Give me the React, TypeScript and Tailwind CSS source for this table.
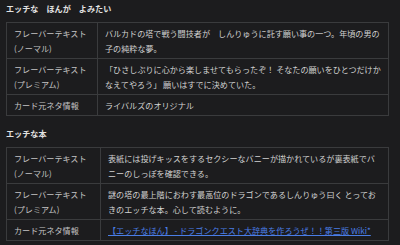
import React from 'react';

type Row = { label: React.ReactNode; value: React.ReactNode };

const Section = ({ title, rows, labelW, valuePr }: { title: string; rows: Row[]; labelW: string; valuePr: string }) => (
  <div>
    <h3 className="h-[15px] leading-[15px] font-bold text-[#e2e2e2] mb-[6px]">{title}</h3>
    <table className="w-[383px] border-collapse border border-[#3a3b3d]">
      <tbody>
        {rows.map((r, i) => (
          <tr key={i} className="border-b border-[#3a3b3d]">
            <td className={`${labelW} align-top pl-[7px] pr-[4px] pt-[3px] pb-[2px] text-[#c4c4c4] border-r border-[#3a3b3d]`}>
              {r.label}
            </td>
            <td className={`${valuePr} align-top pl-[7px] pt-[3px] pb-[2px] text-[#d2d2d2]`}>{r.value}</td>
          </tr>
        ))}
      </tbody>
    </table>
  </div>
);

export default function App() {
  const font = { fontFamily: '"Noto Sans CJK JP", "Noto Sans", sans-serif' };
  return (
    <div className="w-[400px] h-[245px] bg-[#1c1c1e] px-[6px] pt-[1px] text-[8.1px] leading-[15px] overflow-hidden" style={font}>
      <Section
        title="エッチな　ほんが　よみたい"
        labelW="w-[91px]"
        valuePr="pr-[5px]"
        rows={[
          {
            label: <>フレーバーテキスト<br />(ノーマル)</>,
            value: 'バルカドの塔で戦う闘技者が　しんりゅうに託す願い事の一つ。年頃の男の子の純粋な夢。',
          },
          {
            label: <>フレーバーテキスト<br />(プレミアム)</>,
            value: '「ひさしぶりに心から楽しませてもらったぞ！ そなたの願いをひとつだけかなえてやろう」 願いはすでに決めていた。',
          },
          { label: 'カード元ネタ情報', value: 'ライバルズのオリジナル' },
        ]}
      />
      <div className="mt-[10px]">
        <Section
          title="エッチな本"
          labelW="w-[94px]"
          valuePr="pr-[10px]"
          rows={[
            {
              label: <>フレーバーテキスト<br />(ノーマル)</>,
              value: '表紙には投げキッスをするセクシーなバニーが描かれているが裏表紙でバニーのしっぽを確認できる。',
            },
            {
              label: <>フレーバーテキスト<br />(プレミアム)</>,
              value: '謎の塔の最上階におわす最高位のドラゴンであるしんりゅう曰く とっておきのエッチな本。心して読むように。',
            },
            {
              label: 'カード元ネタ情報',
              value: (
                <a className="text-[#4a7ee6] underline" href="#">
                  【エッチなほん】 - ドラゴンクエスト大辞典を作ろうぜ！！第三版 Wiki*
                </a>
              ),
            },
          ]}
        />
      </div>
    </div>
  );
}
